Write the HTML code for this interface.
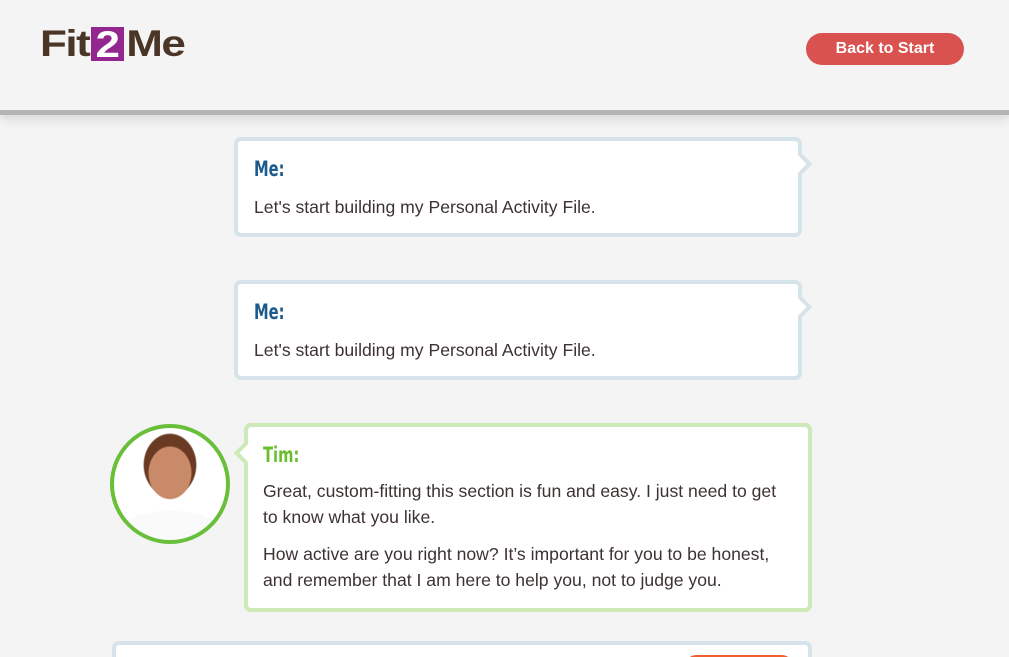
<!DOCTYPE html>
<html><head><style>
html,body{margin:0;width:1009px;height:657px;overflow:hidden}
body{background:#f4f4f4;font-family:"Liberation Sans",sans-serif;position:relative}
.hdr{position:absolute;left:0;top:0;width:1009px;height:110px;background:#f4f4f4;border-bottom:5px solid #b4b4b4;box-shadow:0 4px 10px rgba(0,0,0,.12)}
.logo{position:absolute;left:40px;top:27px;font-weight:bold;font-size:44px;color:#4a3526;letter-spacing:-1.5px;line-height:40px;transform:scaleY(.85);transform-origin:top}
.logo .two{display:inline-block;background:#93268f;color:#fff;width:33px;text-align:center;height:40px;line-height:42px;margin:0 2px;vertical-align:top;letter-spacing:0}
.btn{position:absolute;left:806px;top:33px;width:158px;height:32px;border-radius:16px;background:#d9524f;color:#fff;font-weight:bold;font-size:16px;line-height:32px;text-align:center}
.b{position:absolute;background:#fff;border:4px solid #d7e3ea;border-radius:7px;box-sizing:border-box}
.b h4{margin:0;position:absolute;font-family:"DejaVu Sans Condensed","Liberation Sans Narrow",sans-serif;font-weight:bold;font-size:21px;color:#1d5a8c;transform:scaleX(.78);transform-origin:left}
.b p{margin:0;position:absolute;font-size:17.6px;color:#3d3232;line-height:26px}
.tr{position:absolute;width:12px;height:12px;background:#fff;border-top:4px solid #d7e3ea;border-right:4px solid #d7e3ea;transform:rotate(45deg)}
.g{border-color:#cde9b7}
.g h4{color:#6abf2e}
.tl{position:absolute;width:12px;height:12px;background:#fff;border-bottom:4px solid #cde9b7;border-left:4px solid #cde9b7;transform:rotate(45deg)}
.av{position:absolute;left:110px;top:424px;width:112px;height:112px;border-radius:50%;border:4px solid #6abf3a;background:radial-gradient(ellipse 22px 27px at 50% 40%,#c98a6a 0 95%,transparent 100%),radial-gradient(ellipse 27px 32px at 50% 33%,#6a3a22 0 95%,transparent 100%),radial-gradient(ellipse 60px 30px at 50% 100%,#fafafa 0 95%,transparent 100%),#fff;overflow:hidden}
</style></head><body>
<div class="hdr">
<div class="logo">Fit<span class="two">2</span>Me</div>
<div class="btn">Back to Start</div>
</div>
<div class="b" style="left:234px;top:137px;width:568px;height:100px">
<div class="tr" style="left:555px;top:15px"></div>
<h4 style="left:16px;top:16px">Me:</h4>
<p style="left:16px;top:53px">Let's start building my Personal Activity File.</p>
</div>
<div class="b" style="left:234px;top:280px;width:568px;height:100px">
<div class="tr" style="left:555px;top:15px"></div>
<h4 style="left:16px;top:16px">Me:</h4>
<p style="left:16px;top:53px">Let's start building my Personal Activity File.</p>
</div>
<div class="av"></div>
<div class="b g" style="left:244px;top:423px;width:568px;height:189px">
<div class="tl" style="left:-11px;top:18px"></div>
<h4 style="left:15px;top:16px">Tim:</h4>
<p style="left:15px;top:51px;width:520px">Great, custom-fitting this section is fun and easy. I just need to get to know what you like.</p>
<p style="left:15px;top:114px;width:520px">How active are you right now? It’s important for you to be honest, and remember that I am here to help you, not to judge you.</p>
</div>
<div class="b" style="left:112px;top:641px;width:700px;height:16px;border-bottom:none;border-radius:7px 7px 0 0">
<div style="position:absolute;left:570px;top:10px;width:106px;height:20px;border-radius:10px;background:#ef5f2f"></div>
</div>
</body></html>
